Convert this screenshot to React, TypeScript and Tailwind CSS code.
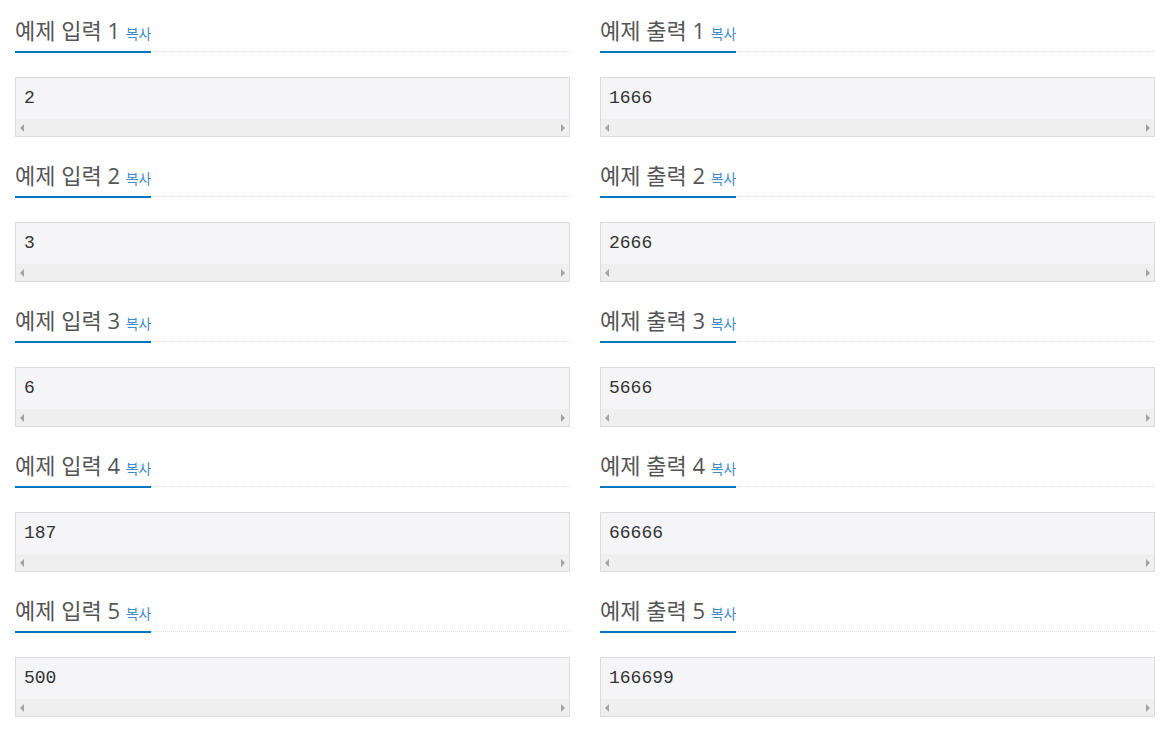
import React from 'react';

const samples = [
  { input: '2', output: '1666' },
  { input: '3', output: '2666' },
  { input: '6', output: '5666' },
  { input: '187', output: '66666' },
  { input: '500', output: '166699' },
];

const Sample: React.FC<{ title: string; data: string }> = ({ title, data }) => (
  <section className="mb-[23px]">
    <div className="flex h-[37px] items-start border-b border-dotted border-[#ddd]">
      <h2 className="h-[38px] shrink-0 overflow-hidden border-b-2 border-[#0076c0] pb-[6px] text-[22px] leading-[30px] font-normal whitespace-nowrap text-[#555]">
        {title}{' '}
        <span className="text-[14px] leading-none text-[#428bca]">복사</span>
      </h2>
    </div>
    <div className="mt-[25px] border border-[#dcdcdc] bg-[#f5f5f7]">
      <pre className="h-[41px] pl-[8px] pt-[10px] text-[18px] leading-[21px] text-[#333]" style={{ fontFamily: '"Liberation Mono", monospace' }}>
        {data}
      </pre>
      <div className="flex h-[17px] items-center justify-between bg-[#efefef] px-[4px]">
        <span className="h-0 w-0 border-y-[4px] border-r-[4px] border-y-transparent border-r-[#a3a3a3]" />
        <span className="h-0 w-0 border-y-[4px] border-l-[4px] border-y-transparent border-l-[#a3a3a3]" />
      </div>
    </div>
  </section>
);

const App: React.FC = () => {
  return (
    <div
      className="min-h-screen bg-white pt-[15px] pl-[15px]"
      style={{ fontFamily: '"Open Sans", "Noto Sans CJK KR", sans-serif' }}
    >
      <div className="grid w-[1140px] grid-cols-2 gap-x-[30px]">
        {samples.map((s, i) => (
          <React.Fragment key={i}>
            <Sample title={`예제 입력 ${i + 1}`} data={s.input} />
            <Sample title={`예제 출력 ${i + 1}`} data={s.output} />
          </React.Fragment>
        ))}
      </div>
    </div>
  );
};

export default App;
